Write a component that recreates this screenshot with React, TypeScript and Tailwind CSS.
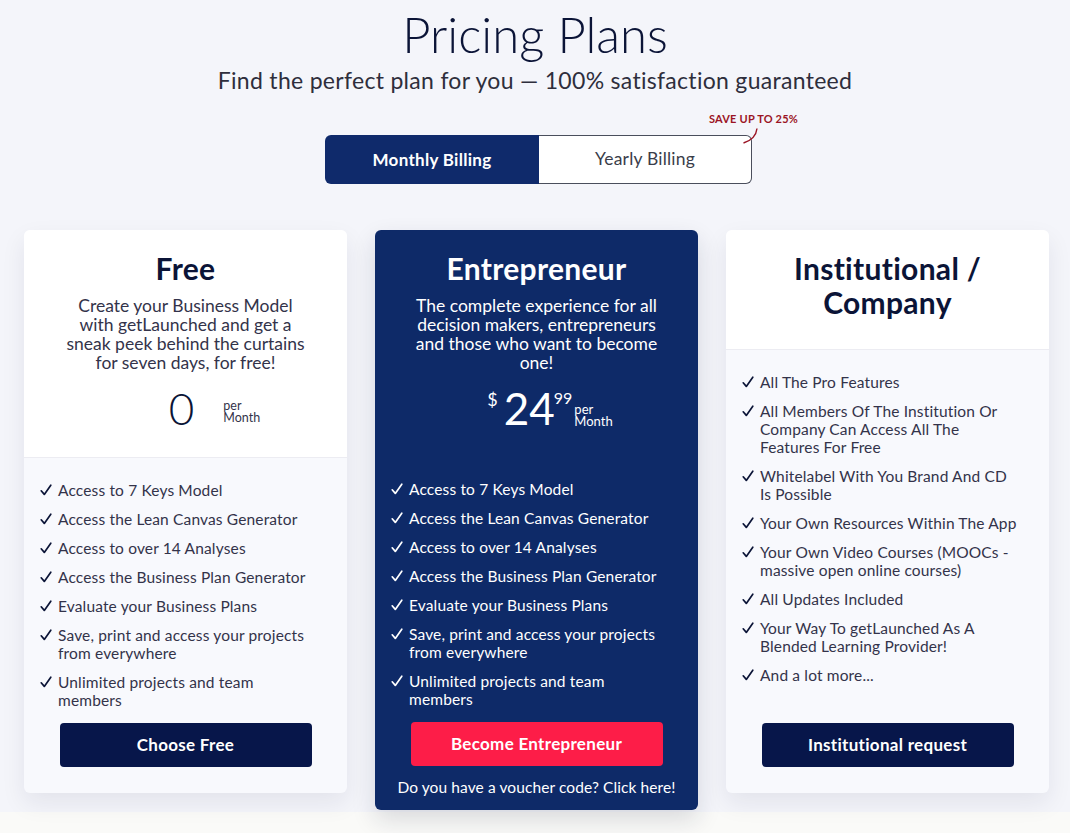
import React from 'react';

const freeFeatures: string[][] = [
  ['Access to 7 Keys Model'],
  ['Access the Lean Canvas Generator'],
  ['Access to over 14 Analyses'],
  ['Access the Business Plan Generator'],
  ['Evaluate your Business Plans'],
  ['Save, print and access your projects', 'from everywhere'],
  ['Unlimited projects and team', 'members'],
];

const institutionalFeatures: string[][] = [
  ['All The Pro Features'],
  ['All Members Of The Institution Or', 'Company Can Access All The', 'Features For Free'],
  ['Whitelabel With You Brand And CD', 'Is Possible'],
  ['Your Own Resources Within The App'],
  ['Your Own Video Courses (MOOCs -', 'massive open online courses)'],
  ['All Updates Included'],
  ['Your Way To getLaunched As A', 'Blended Learning Provider!'],
  ['And a lot more...'],
];

function Check({ color }: { color: string }) {
  return (
    <svg className="mt-[3px]" width="12" height="12" viewBox="0 0 12 12">
      <path d="M1.2 6.8 L4.3 10.4 L10.8 1.2" fill="none" stroke={color} strokeWidth="1.7" strokeLinecap="round" strokeLinejoin="round" />
    </svg>
  );
}

function FeatureList({ items, dark }: { items: string[][]; dark?: boolean }) {
  return (
    <ul className="flex flex-col gap-[11px]">
      {items.map((lines) => (
        <li
          key={lines[0]}
          className={`flex text-[15.5px] leading-[18px] tracking-[0.15px] ${dark ? 'text-white' : 'text-[#33334a]'}`}
        >
          <span className="w-[18px] shrink-0">
            <Check color={dark ? '#ffffff' : '#0b1437'} />
          </span>
          <span className="whitespace-nowrap">
            {lines.map((l, i) => (
              <span key={i} className="block">
                {l}
              </span>
            ))}
          </span>
        </li>
      ))}
    </ul>
  );
}

function Lines({ lines }: { lines: string[] }) {
  return (
    <>
      {lines.map((l, i) => (
        <span key={i} className="block whitespace-nowrap">
          {l}
        </span>
      ))}
    </>
  );
}

export default function App() {
  return (
    <div className="min-h-screen bg-[#fafaf8]" style={{ fontFamily: 'Lato, "Open Sans", sans-serif' }}>
      <section className="bg-[#f4f5fa] pt-[6px] pb-[2px]">
        <h1 className="text-center text-[49px] leading-[56px] font-light text-[#0b1437]">Pricing Plans</h1>
        <p className="mt-[4px] text-center text-[23px] leading-[28px] tracking-[0.3px] text-[#2e2e3c]">
          Find the perfect plan for you — 100% satisfaction guaranteed
        </p>

        <div className="mt-[41px] flex justify-center pl-[7px]">
          <div className="relative flex h-[49px] w-[427px]">
            <button className="w-[214px] rounded-l-[6px] bg-[#0f2a6b] text-[17px] font-bold tracking-[0.3px] text-white">
              Monthly Billing
            </button>
            <button className="flex-1 rounded-r-[6px] border border-l-0 border-[#4a4e5c] bg-white text-[17.5px] tracking-[0.2px] text-[#3a3d4a]">
              Yearly Billing
            </button>
            <span className="absolute right-[-46px] top-[-23px] text-[11px] leading-[13px] font-bold tracking-[0.2px] text-[#9b1424]">
              SAVE UP TO 25%
            </span>
            <svg className="absolute left-[418px] top-[-7px]" width="15" height="16" viewBox="0 0 15 16">
              <path d="M14 0.5 C13.3 7 8.5 12.5 0.5 15" fill="none" stroke="#9b1424" strokeWidth="1.4" />
            </svg>
          </div>
        </div>

        <div className="mt-[46px] flex items-start gap-[28px] pl-[24px]">
          {/* Free */}
          <div className="w-[323px] overflow-hidden rounded-[6px] bg-[#f8f9fd] shadow-[0_10px_24px_rgba(20,30,60,0.08)]">
            <div className="border-b border-[#ececf2] bg-white px-[10px] pt-[21px] pb-[27px] text-center">
              <h2 className="text-[30px] leading-[34px] font-bold tracking-[0.3px] text-[#0b1437]">Free</h2>
              <p className="mt-[11px] text-[17.5px] leading-[19px] text-[#33334a]">
                <Lines
                  lines={[
                    'Create your Business Model',
                    'with getLaunched and get a',
                    'sneak peek behind the curtains',
                    'for seven days, for free!',
                  ]}
                />
              </p>
              <div className="mt-[14px] flex h-[44px] items-start justify-center pl-[58px]">
                <span className="text-[44px] leading-[44px] font-light text-[#0b1437]">0</span>
                <span className="ml-[29px] mt-[14px] text-left text-[12.5px] leading-[12px] text-[#33334a]">
                  per
                  <br />
                  Month
                </span>
              </div>
            </div>
            <div className="px-[16px] pt-[23px] pb-[26px]">
              <FeatureList items={freeFeatures} />
              <button className="mx-auto mt-[14px] block h-[44px] w-[252px] rounded-[4px] bg-[#07164a] text-[17px] font-bold tracking-[0.3px] text-white">
                Choose Free
              </button>
            </div>
          </div>

          {/* Entrepreneur */}
          <div className="w-[323px] rounded-[6px] bg-[#0e2a68] shadow-[0_10px_24px_rgba(20,30,60,0.14)]">
            <div className="px-[10px] pt-[21px] pb-[27px] text-center">
              <h2 className="text-[30px] leading-[34px] font-bold tracking-[0.3px] text-white">Entrepreneur</h2>
              <p className="mt-[11px] text-[17.5px] leading-[19px] text-white">
                <Lines
                  lines={[
                    'The complete experience for all',
                    'decision makers, entrepreneurs',
                    'and those who want to become',
                    'one!',
                  ]}
                />
              </p>
              <div className="mt-[14px] flex h-[44px] items-start justify-center pl-[27px] text-white">
                <span className="mt-[4px] text-[18px] leading-[18px]">$</span>
                <span className="ml-[6px] text-[44px] leading-[44px]">24</span>
                <span className="ml-[-1px] mt-[4px] text-[16px] leading-[16px]">99</span>
                <span className="ml-[2px] mt-[17px] text-left text-[13px] leading-[12px]">
                  per
                  <br />
                  Month
                </span>
              </div>
            </div>
            <div className="px-[16px] pt-[23px] pb-[14px]">
              <FeatureList items={freeFeatures} dark />
              <button className="mx-auto mt-[14px] block h-[44px] w-[252px] rounded-[4px] bg-[#fd1d48] text-[17px] font-bold tracking-[0.3px] text-white">
                Become Entrepreneur
              </button>
              <p className="mt-[12px] text-center text-[15.5px] leading-[18px] tracking-[0.1px] text-white">
                Do you have a voucher code? Click here!
              </p>
            </div>
          </div>

          {/* Institutional */}
          <div className="w-[323px] overflow-hidden rounded-[6px] bg-[#f8f9fd] shadow-[0_10px_24px_rgba(20,30,60,0.08)]">
            <div className="border-b border-[#ececf2] bg-white px-[10px] pt-[21px] pb-[30px] text-center">
              <h2 className="text-[30px] leading-[34px] font-bold tracking-[0.3px] text-[#0b1437]">
                Institutional /
                <br />
                Company
              </h2>
            </div>
            <div className="px-[16px] pt-[23px] pb-[26px]">
              <FeatureList items={institutionalFeatures} />
              <button className="mx-auto mt-[39px] block h-[44px] w-[252px] rounded-[4px] bg-[#07164a] text-[17px] font-bold tracking-[0.3px] text-white">
                Institutional request
              </button>
            </div>
          </div>
        </div>
      </section>
    </div>
  );
}
